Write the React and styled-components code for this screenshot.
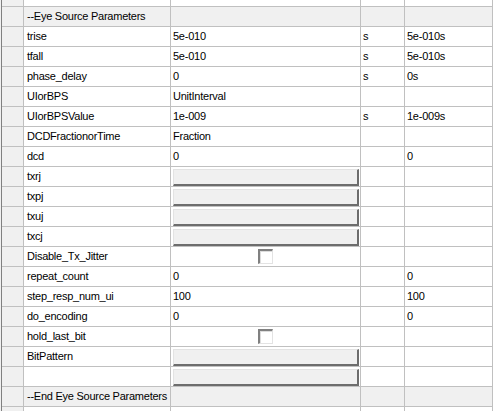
import React from "react";
import styled, { createGlobalStyle } from "styled-components";

const Global = createGlobalStyle`
  html, body { margin: 0; padding: 0; background: #ffffff; }
  body { font-family: "Liberation Sans", Arial, sans-serif; font-size: 11px; letter-spacing: -0.25px; color: #000; }
`;

const Outer = styled.div`
  width: 498px;
  height: 411px;
  overflow: hidden;
  border-left: 1px solid #f0f0f0;
  box-sizing: border-box;
`;

const Grid = styled.div`
  border-left: 1px solid #808080;
  width: 491px;
  display: flex;
  flex-direction: column;
`;

const Row = styled.div`
  display: grid;
  grid-template-columns: 22px 147px 190px 44px 88px;
  height: ${(p) => p.$h || 20}px;
  box-sizing: border-box;
  border-bottom: ${(p) => (p.$noLine ? "none" : "1px solid #c0c0c0")};
  background: ${(p) => (p.$section ? "#f0f0f0" : "#ffffff")};
`;

const Cell = styled.div`
  border-right: 1px solid #c0c0c0;
  padding-left: ${(p) => p.$pad ?? 2}px;
  line-height: 19px;
  white-space: nowrap;
  overflow: ${(p) => (p.$visible ? "visible" : "hidden")};
  position: relative;
  z-index: ${(p) => (p.$visible ? 1 : 0)};
  display: flex;
  align-items: flex-start;
  justify-content: ${(p) => (p.$center ? "center" : "flex-start")};
`;

const HeaderCell = styled.div`
  background: #f0f0f0;
  border-right: 1px solid #c0c0c0;
`;

const Button = styled.div`
  margin-top: 2px;
  width: 186px;
  height: 17px;
  box-sizing: border-box;
  background: #f0f0f0;
  border-top: 1px solid #e3e3e3;
  border-left: 1px solid #e3e3e3;
  border-right: 2px solid #6d6d6d;
  border-bottom: 2px solid #6d6d6d;
`;

const Check = styled.div`
  margin-top: 2px;
  width: 15px;
  height: 15px;
  box-sizing: border-box;
  background: #ffffff;
  border-top: 2px solid #808080;
  border-left: 2px solid #808080;
  border-right: 1px solid #e3e3e3;
  border-bottom: 1px solid #e3e3e3;
  box-shadow: inset 1px 1px 0 #dcdcdc;
`;

const rows = [
  { section: "--Eye Source Parameters" },
  { name: "trise", value: "5e-010", unit: "s", def: "5e-010s" },
  { name: "tfall", value: "5e-010", unit: "s", def: "5e-010s" },
  { name: "phase_delay", value: "0", unit: "s", def: "0s" },
  { name: "UIorBPS", value: "UnitInterval" },
  { name: "UIorBPSValue", value: "1e-009", unit: "s", def: "1e-009s" },
  { name: "DCDFractionorTime", value: "Fraction" },
  { name: "dcd", value: "0", def: "0" },
  { name: "txrj", kind: "button" },
  { name: "txpj", kind: "button" },
  { name: "txuj", kind: "button" },
  { name: "txcj", kind: "button" },
  { name: "Disable_Tx_Jitter", kind: "check" },
  { name: "repeat_count", value: "0", def: "0" },
  { name: "step_resp_num_ui", value: "100", def: "100" },
  { name: "do_encoding", value: "0", def: "0" },
  { name: "hold_last_bit", kind: "check" },
  { name: "BitPattern", kind: "button" },
  { name: "", kind: "button" },
  { section: "--End Eye Source Parameters" },
];

export default function App() {
  return (
    <>
      <Global />
      <Outer>
        <Grid>
          <Row $h={7}>
            <HeaderCell />
            <Cell />
            <Cell />
            <Cell />
            <Cell />
          </Row>
          {rows.map((r, i) =>
            r.section ? (
              <Row key={i} $section>
                <HeaderCell />
                <Cell $pad={3} $visible>{r.section}</Cell>
                <Cell />
                <Cell />
                <Cell />
              </Row>
            ) : (
              <Row key={i}>
                <HeaderCell />
                <Cell $pad={3}>{r.name}</Cell>
                {r.kind === "button" ? (
                  <Cell>
                    <Button />
                  </Cell>
                ) : r.kind === "check" ? (
                  <Cell $center $pad={0}>
                    <Check />
                  </Cell>
                ) : (
                  <Cell>{r.value}</Cell>
                )}
                <Cell>{r.unit}</Cell>
                <Cell>{r.def}</Cell>
              </Row>
            )
          )}
          <Row $h={4} $noLine>
            <HeaderCell />
            <Cell />
            <Cell />
            <Cell />
            <Cell />
          </Row>
        </Grid>
      </Outer>
    </>
  );
}
